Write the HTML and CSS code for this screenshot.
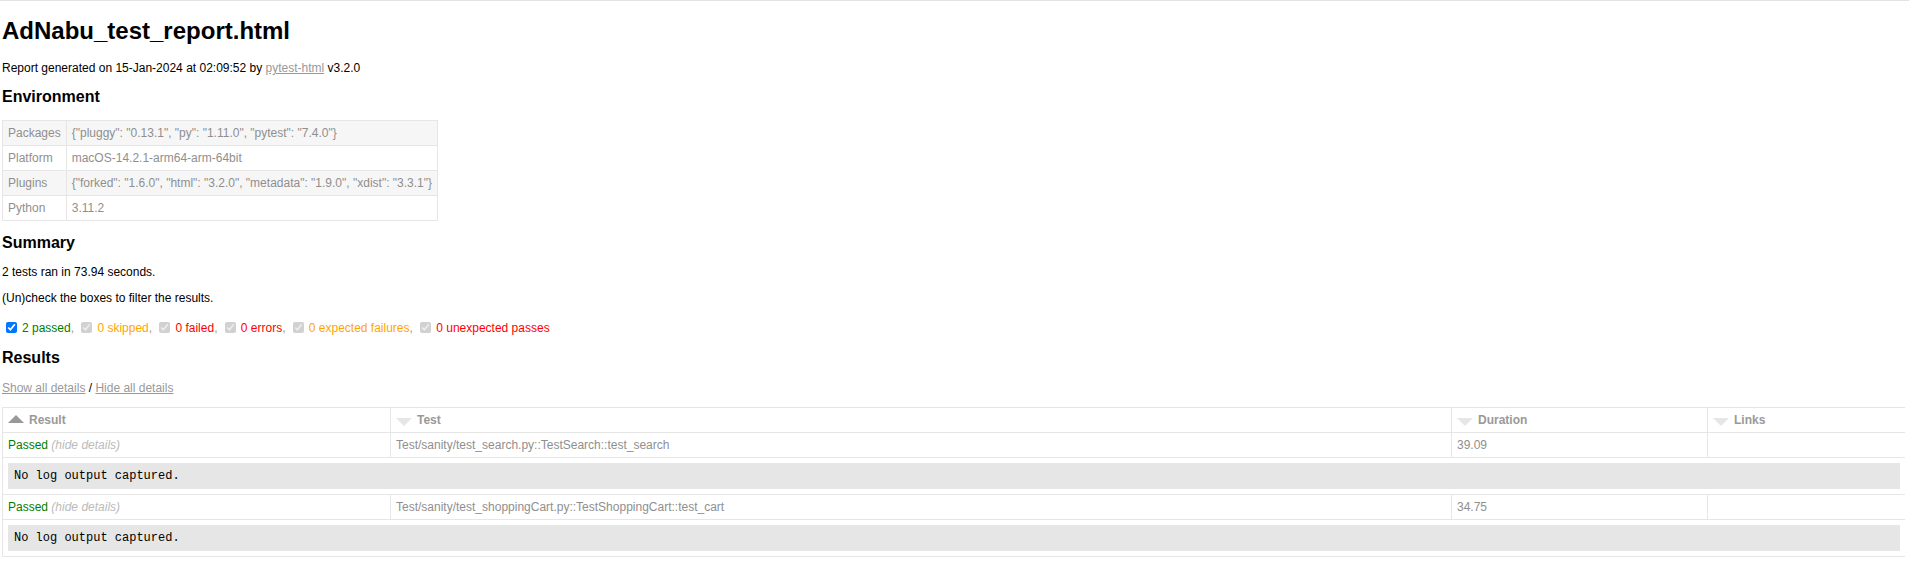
FILE: index.html
```html
<!DOCTYPE html>
<html>
<head>
<meta charset="utf-8">
<title>AdNabu_test_report.html</title>
<link rel="stylesheet" href="styles.css">
</head>
<body>
<h1>AdNabu_test_report.html</h1>
<p>Report generated on 15-Jan-2024 at 02:09:52 by <a href="#">pytest-html</a> v3.2.0</p>
<h2>Environment</h2>
<table class="environment">
  <tr><td>Packages</td><td>{"pluggy": "0.13.1", "py": "1.11.0", "pytest": "7.4.0"}</td></tr>
  <tr><td>Platform</td><td>macOS-14.2.1-arm64-arm-64bit</td></tr>
  <tr><td>Plugins</td><td>{"forked": "1.6.0", "html": "3.2.0", "metadata": "1.9.0", "xdist": "3.3.1"}</td></tr>
  <tr><td>Python</td><td>3.11.2</td></tr>
</table>
<h2>Summary</h2>
<p>2 tests ran in 73.94 seconds. </p>
<p>(Un)check the boxes to filter the results.</p>
<div class="filters"><input class="filter" type="checkbox" checked><span class="passed">2 passed</span>, <input class="filter" type="checkbox" checked disabled><span class="skipped">0 skipped</span>, <input class="filter" type="checkbox" checked disabled><span class="failed">0 failed</span>, <input class="filter" type="checkbox" checked disabled><span class="error">0 errors</span>, <input class="filter" type="checkbox" checked disabled><span class="xfailed">0 expected failures</span>, <input class="filter" type="checkbox" checked disabled><span class="xpassed">0 unexpected passes</span></div>
<h2>Results</h2>
<p><a href="#">Show all details</a> / <a href="#">Hide all details</a></p>
<table class="results-table">
  <colgroup>
    <col class="w-result"><col class="w-name"><col class="w-duration"><col class="w-links">
  </colgroup>
  <thead>
    <tr>
      <th class="sortable asc active"><div class="sort-icon"></div>Result</th>
      <th class="sortable inactive"><div class="sort-icon"></div>Test</th>
      <th class="sortable inactive"><div class="sort-icon"></div>Duration</th>
      <th class="sortable inactive"><div class="sort-icon"></div>Links</th>
    </tr>
  </thead>
  <tbody class="passed">
    <tr>
      <td class="col-result">Passed <span class="collapser">(hide details)</span></td>
      <td class="col-name">Test/sanity/test_search.py::TestSearch::test_search</td>
      <td class="col-duration">39.09</td>
      <td class="col-links"></td>
    </tr>
    <tr>
      <td class="extra" colspan="4"><div class="log">No log output captured.</div></td>
    </tr>
  </tbody>
  <tbody class="passed">
    <tr>
      <td class="col-result">Passed <span class="collapser">(hide details)</span></td>
      <td class="col-name">Test/sanity/test_shoppingCart.py::TestShoppingCart::test_cart</td>
      <td class="col-duration">34.75</td>
      <td class="col-links"></td>
    </tr>
    <tr>
      <td class="extra" colspan="4"><div class="log">No log output captured.</div></td>
    </tr>
  </tbody>
</table>
</body>
</html>
```
FILE: styles.css
```css
html {
  border-top: 1px solid #e3e3e3;
  background: #fff;
}
body {
  font-family: "Liberation Sans", Arial, Helvetica, sans-serif;
  font-size: 12px;
  color: #999;
  margin: 0 4px 8px 2px;
}
h1 {
  font-size: 24px;
  color: black;
  margin: 16px 0 16px;
}
h2 {
  font-size: 16px;
  color: black;
  margin: 13.3px 0;
}
p {
  color: black;
  margin: 12px 0;
}
a {
  color: #999;
}
table {
  border-collapse: collapse;
}
.environment td {
  padding: 5px;
  border: 1px solid #e6e6e6;
  vertical-align: top;
  color: #8f8f8f;
}
.environment tr:nth-child(odd) {
  background-color: #f6f6f6;
}
.filters {
  padding-top: 3px;
  height: 16px;
  line-height: 16px;
}
.filter {
  width: 11px;
  height: 11px;
  margin: 0 5px 0 4px;
  vertical-align: -1px;
}
.passed, .passed .col-result { color: green; }
.skipped, .xfailed { color: orange; }
.failed, .error, .xpassed { color: red; }
.results-table {
  border: 1px solid #e6e6e6;
  color: #999;
  font-size: 12px;
  width: 100%;
  table-layout: fixed;
}
.w-result { width: 388px; }
.w-name { width: 1061px; }
.w-duration { width: 256px; }
.w-links { width: 198px; }
.results-table th,
.results-table td {
  padding: 5px;
  border: 1px solid #e6e6e6;
  text-align: left;
}
.results-table th {
  font-weight: bold;
}
.results-table .col-name,
.results-table .col-duration,
.results-table .col-links {
  color: #8f8f8f;
}
.collapser {
  color: #bbb;
  font-style: italic;
}
.sort-icon {
  font-size: 0;
  float: left;
  margin-right: 5px;
  margin-top: 5px;
  width: 0;
  height: 0;
  border-left: 8px solid transparent;
  border-right: 8px solid transparent;
}
.inactive .sort-icon {
  border-top: 8px solid #e6e6e6;
}
.asc.active .sort-icon {
  margin-top: 2px;
  border-bottom: 8px solid #999;
}
.log {
  background-color: #e6e6e6;
  border: 1px solid #e6e6e6;
  color: black;
  display: block;
  font-family: "Liberation Mono", "Courier New", monospace;
  padding: 5px;
  white-space: pre-wrap;
}
```
